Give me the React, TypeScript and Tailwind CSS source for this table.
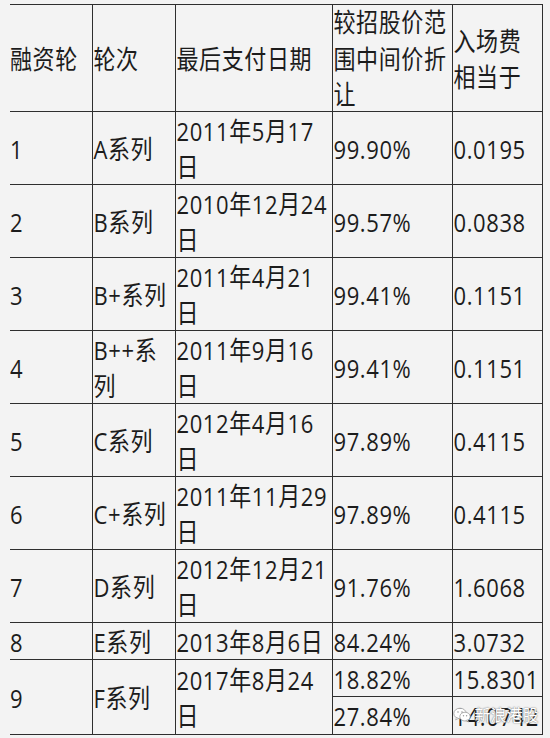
import React from "react";

const rows: string[][] = [
  ["1", "A系列", "2011年5月17日", "99.90%", "0.0195"],
  ["2", "B系列", "2010年12月24日", "99.57%", "0.0838"],
  ["3", "B+系列", "2011年4月21日", "99.41%", "0.1151"],
  ["4", "B++系列", "2011年9月16日", "99.41%", "0.1151"],
  ["5", "C系列", "2012年4月16日", "97.89%", "0.4115"],
  ["6", "C+系列", "2011年11月29日", "97.89%", "0.4115"],
  ["7", "D系列", "2012年12月21日", "91.76%", "1.6068"],
  ["8", "E系列", "2013年8月6日", "84.24%", "3.0732"],
];

const cell = "border-r border-b border-[#2e2e2e] px-px py-0 align-middle text-left font-normal";
const first = "border-r border-b border-[#2e2e2e] pr-px pl-0 py-0 align-middle text-left font-normal";

function T({ children }: { children: React.ReactNode }) {
  return <div className="origin-center scale-y-[1.18] leading-[30.5px]">{children}</div>;
}

function WeChatIcon() {
  return (
    <svg width="18" height="16" viewBox="0 0 18 16" className="shrink-0">
      <ellipse cx="7" cy="6.5" rx="6.2" ry="5.3" fill="#ffffff" stroke="#9a9a9a" strokeWidth="0.8" />
      <path d="M3.5 10.5 L2.6 13 L5.6 11.4 Z" fill="#ffffff" stroke="#9a9a9a" strokeWidth="0.6" />
      <ellipse cx="12" cy="9.6" rx="5.2" ry="4.4" fill="#ffffff" stroke="#9a9a9a" strokeWidth="0.8" />
      <path d="M14.6 12.8 L15.6 15 L12.8 13.6 Z" fill="#ffffff" stroke="#9a9a9a" strokeWidth="0.6" />
      <circle cx="5" cy="5" r="0.8" fill="#9a9a9a" />
      <circle cx="9" cy="5" r="0.8" fill="#9a9a9a" />
      <circle cx="10.5" cy="8.8" r="0.7" fill="#9a9a9a" />
      <circle cx="13.6" cy="8.8" r="0.7" fill="#9a9a9a" />
    </svg>
  );
}

export default function App() {
  return (
    <div className="w-[550px] h-[738px] bg-[#f3f3f3] pt-[4px] pl-[10px] overflow-hidden font-['Open_Sans','Noto_Sans_CJK_SC',sans-serif] text-[22px] leading-[30.5px] tracking-[0.6px] text-[#1c1c1c]">
      <table className="table-fixed border-collapse w-[532px]">
        <colgroup>
          <col className="w-[82px]" />
          <col className="w-[83px]" />
          <col className="w-[157px]" />
          <col className="w-[120px]" />
          <col className="w-[90px]" />
        </colgroup>
        <thead>
          <tr className="h-[107px]">
            <th className={`${first} border-t`}><T>融资轮</T></th>
            <th className={`${cell} border-t`}><T>轮次</T></th>
            <th className={`${cell} border-t`}><T>最后支付日期</T></th>
            <th className={`${cell} border-t`}><T>较招股价范围中间价折让</T></th>
            <th className={`${cell} border-t`}><T>入场费相当于</T></th>
          </tr>
        </thead>
        <tbody>
          {rows.map((r, i) => (
            <tr key={r[0]} className={i < 7 ? "h-[73px]" : "h-[37px]"}>
              <td className={first}><T>{r[0]}</T></td>
              <td className={cell}><T>{r[1]}</T></td>
              <td className={cell}><T>{r[2]}</T></td>
              <td className={cell}><T>{r[3]}</T></td>
              <td className={cell}><T>{r[4]}</T></td>
            </tr>
          ))}
          <tr className="h-[37px]">
            <td rowSpan={2} className={first}><T>9</T></td>
            <td rowSpan={2} className={cell}><T>F系列</T></td>
            <td rowSpan={2} className={cell}><T>2017年8月24日</T></td>
            <td className={cell}><T>18.82%</T></td>
            <td className={cell}><T>15.8301</T></td>
          </tr>
          <tr className="h-[38px]">
            <td className={cell}><T>27.84%</T></td>
            <td className={`${cell} relative`}>
              <T>14.0742</T>
              <div className="absolute left-0 top-[8px] flex items-center gap-[4px] text-[16px] leading-[20px] tracking-normal text-white [text-shadow:0_0_1px_#777,0_0_2px_#999]">
                <WeChatIcon />
                <span>新浪港股</span>
              </div>
            </td>
          </tr>
        </tbody>
      </table>
    </div>
  );
}
